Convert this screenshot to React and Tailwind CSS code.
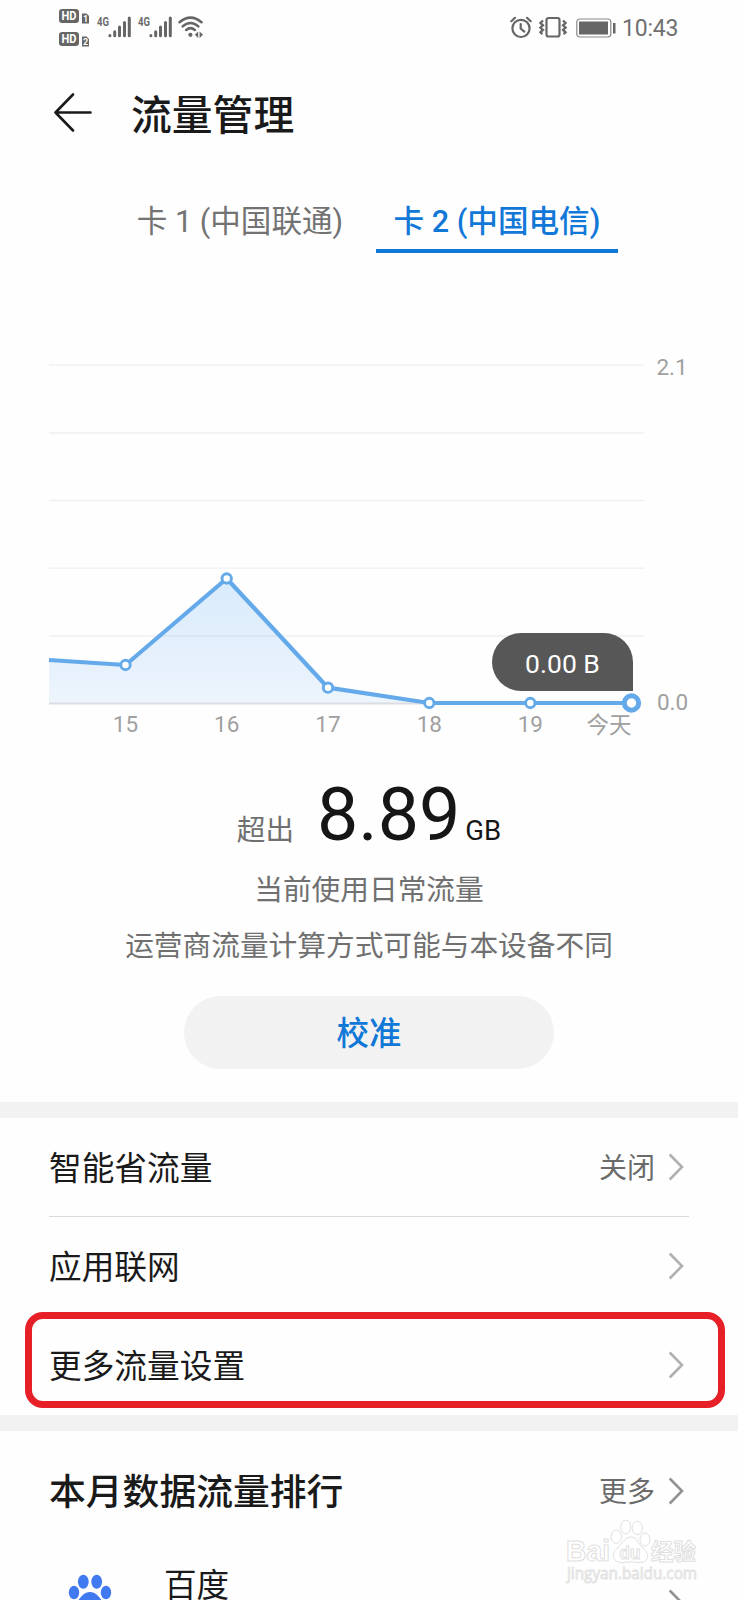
const cjk = "font-['Roboto','Noto_Sans_CJK_SC',sans-serif]";

const points = [
  [125.5, 665],
  [226.7, 578.5],
  [328, 687.7],
  [429.3, 703],
  [530.3, 703],
];

function Signal() {
  return (
    <svg className="h-[22px] w-[24px]" viewBox="0 0 24 22" stroke="#666" strokeWidth="3" strokeLinecap="round">
      <path d="M1.9 19.6v0.2M6.7 15.8v4M11.5 11v8.8M16.5 6.5v13.3M21.3 2v17.8" />
    </svg>
  );
}

function HdBadge({ n }) {
  return (
    <svg className="h-[15px] w-[32px]" viewBox="0 0 32 15" fontFamily="Roboto, sans-serif" fontWeight="700">
      <rect x="0" y="0" width="20" height="14" rx="3.2" fill="#666" />
      <text x="2.4" y="11.3" fontSize="12" fill="#fff" textLength="15" lengthAdjust="spacingAndGlyphs">HD</text>
      <path d="M23 4.5h4.5l2.5 2.5V14.5h-7z" fill="#666" />
      <text x="24.1" y="12.9" fontSize="9" fill="#fff">{n}</text>
    </svg>
  );
}

function FourG() {
  return (
    <svg className="-mt-[3px] h-[18px] w-[13px]" viewBox="0 -3 13 18">
      <text x="0" y="10" fontSize="13" fontWeight="700" fontFamily="Roboto, sans-serif" fill="#6a6a6a" textLength="12" lengthAdjust="spacingAndGlyphs">4G</text>
    </svg>
  );
}

function StatusBar() {
  return (
    <header className="flex h-[56px] items-start pl-[59px] pr-[59px]">
      <div className="mt-[9px] flex flex-col gap-[8px]">
        <HdBadge n="1" />
        <HdBadge n="2" />
      </div>
      <div className="ml-[6px] mt-[16px] flex items-start"><FourG /><div className="-ml-[2px]"><Signal /></div></div>
      <div className="ml-[6px] mt-[16px] flex items-start"><FourG /><div className="-ml-[2px]"><Signal /></div></div>
      <svg className="ml-[5px] mt-[16px] h-[22px] w-[26px]" viewBox="0 0 26 22" fill="none" stroke="#666" strokeWidth="2.5" strokeLinecap="round">
        <path d="M1.5 6.3Q12.5 -3 23.5 6.3M4.7 10.4Q12.5 3.6 20.3 10.4M8.2 14Q12.5 10.2 16.8 14" />
        <circle cx="12.4" cy="18.8" r="2.1" fill="#666" stroke="none" />
        <path d="M20.2 15.5v6.5l-3.4-3.2zM21.6 15.5v6.5l3.4-3.2z" fill="#666" stroke="none" />
      </svg>
      <div className="ml-auto mt-[16px] flex h-[23px] items-center">
        <svg className="h-[23px] w-[22px]" viewBox="0 0 22 23" fill="none" stroke="#666" strokeWidth="2.2" strokeLinecap="round">
          <circle cx="11" cy="12.4" r="8.6" />
          <path d="M10.7 8v4.6l3.6 3M1.3 5.2L5 1.8M20.7 5.2L17 1.8" />
        </svg>
        <svg className="ml-[7px] h-[23px] w-[28px]" viewBox="0 0 28 23" fill="none" stroke="#666" strokeWidth="2.2">
          <rect x="7.5" y="2" width="13" height="18.5" rx="2" />
          <path d="M4 4.5L1.4 7l2.6 2.3-2.6 2.3 2.6 2.3-2.6 2.3 2 1.9M24 4.5L26.6 7 24 9.3l2.6 2.3-2.6 2.3 2.6 2.3-2 1.9" strokeWidth="2.3" />
        </svg>
        <svg className="ml-[9px] h-[20px] w-[40px]" viewBox="0 0 40 20">
          <rect x="0.8" y="1" width="34" height="18" rx="3" fill="#fff" stroke="#888" strokeWidth="1.2" />
          <path d="M3 3.5h29v13H3zM37 5h2.5v10.5H37z" fill="#666" />
        </svg>
        <span className="ml-[6px] w-[57px] pt-[2px] text-[23px] leading-[23px] tracking-[-0.2px] text-[#707070]">10:43</span>
      </div>
    </header>
  );
}

function Chevron({ dark }) {
  return (
    <svg className="-mt-px ml-[13px] h-[28px] w-[17px]" viewBox="0 0 17 28" fill="none" stroke={dark ? "#929292" : "#b0b0b0"} strokeWidth="2.6">
      <path d="M1.7 1.5L14 14L1.7 26.5" />
    </svg>
  );
}

function Chart() {
  return (
    <section className="relative h-[480px]">
      <svg className="block h-[480px] w-[738px]" viewBox="0 280 738 480">
        <defs>
          <linearGradient id="area" x1="0" x2="0" y1="578" y2="703" gradientUnits="userSpaceOnUse">
            <stop offset="0" stopColor="#d9ebfc" />
            <stop offset="1" stopColor="#edf4fc" />
          </linearGradient>
        </defs>
        <path d="M49 660L125.5 665L226.7 578.5L328 687.7L429.3 703H49z" fill="url(#area)" />
        <path d="M49 365.2H644M49 433H644M49 500.5H644M49 568.2H644M49 636H644" stroke="#000" strokeOpacity="0.06" strokeWidth="1.3" />
        <path d="M49 703.5H632" stroke="#dcdde2" strokeWidth="2" />
        <path d="M49 660L125.5 665L226.7 578.5L328 687.7L429.3 703H631.5" fill="none" stroke="#64aaea" strokeWidth="4.2" strokeLinejoin="round" />
        {points.map(([x, y]) => (
          <circle key={x} cx={x} cy={y} r="4.7" fill="#fff" stroke="#64aaea" strokeWidth="2.9" />
        ))}
        <circle cx="631.5" cy="703" r="7.2" fill="#fff" stroke="#64aaea" strokeWidth="5" />
        <g fill="#a0a0a0" fontSize="22.5" fontFamily="Roboto, 'Noto Sans CJK SC', sans-serif" textAnchor="middle">
          <text x="125.5" y="732">15</text>
          <text x="226.7" y="732">16</text>
          <text x="328" y="732">17</text>
          <text x="429.3" y="732">18</text>
          <text x="530.3" y="732">19</text>
          <text x="609" y="733">今天</text>
          <text x="672" y="375">2.1</text>
          <text x="672.5" y="710">0.0</text>
        </g>
      </svg>
      <div className="absolute left-[492px] top-[353px] flex h-[58px] w-[141px] items-center justify-center rounded-[29px] rounded-br-none bg-[#575757] pt-[4px] text-[26.5px] leading-none text-white">
        0.00 B
      </div>
    </section>
  );
}

function Row({ label, value }) {
  return (
    <div className="flex h-[99px] items-center pl-[49px] pr-[53px] text-[32.7px] text-[#1a1a1a]">
      <span className="pt-[5px]">{label}</span>
      <span className="ml-auto pt-[3px] text-[28px] text-[#6b6b6b]">{value}</span>
      <Chevron />
    </div>
  );
}

function Watermark() {
  return (
    <svg className="absolute left-[560px] top-[1515px] h-[75px] w-[145px]" viewBox="560 1515 145 75" fill="#fff" stroke="#e0e0e0" strokeWidth="1">
      <g fontFamily="'Liberation Sans', 'Noto Sans CJK SC', sans-serif" fontWeight="700">
        <text x="566" y="1561" fontSize="29" textLength="44" lengthAdjust="spacingAndGlyphs">Bai</text>
        <ellipse cx="616.3" cy="1536.7" rx="5.2" ry="6.6" />
        <ellipse cx="625.7" cy="1527" rx="5" ry="6.8" />
        <ellipse cx="637.3" cy="1528" rx="5.2" ry="6.6" />
        <ellipse cx="645" cy="1539.5" rx="5" ry="6.5" />
        <path d="M631 1537C624 1537 622 1545 617.500 1548C610 1554 613 1563 623 1562.500Q631 1561 639 1562.500C649 1563 650 1554 643 1548C638 1544 637 1537 631 1537z" />
        <text x="619.5" y="1558.500" fontSize="18" textLength="21" lengthAdjust="spacingAndGlyphs">du</text>
        <text x="651" y="1560" fontSize="23" textLength="45" lengthAdjust="spacingAndGlyphs">经验</text>
      </g>
      <text x="567" y="1578.500" fontSize="15.5" fontFamily="'Open Sans', sans-serif" fill="#fafafa" strokeWidth="0.8" textLength="130" lengthAdjust="spacingAndGlyphs">jingyan.baidu.com</text>
    </svg>
  );
}

export default function App() {
  return (
    <div className={`relative h-[1600px] w-[738px] overflow-hidden bg-[#fefefe] ${cjk}`}>
      <StatusBar />
      <div className="flex h-[118px] items-center pl-[53px]">
        <svg className="-mt-[4px] h-[40px] w-[40px]" viewBox="0 0 40 40" fill="none" stroke="#1a1a1a" strokeWidth="2.6" strokeLinecap="round" strokeLinejoin="round">
          <path d="M37.5 19.5H2.5M20 1.5L2.5 19.5L20 37.5" />
        </svg>
        <h1 className="ml-[38px] pt-[3px] text-[40.8px] font-medium leading-none text-[#1a1a1a]">流量管理</h1>
      </div>
      <nav className="flex h-[106px] items-start pl-[119px] text-[30.6px]">
        <div className="mt-[24px] flex h-[55px] w-[242px] justify-center pt-[2px] leading-[44px] text-[#737373]">卡 1 (中国联通)</div>
        <div className="ml-[15px] mt-[24px] flex h-[55px] w-[242px] justify-center border-b-4 border-[#1278d8] pt-[2px] font-medium leading-[44px] text-[#1278d8]">卡 2 (中国电信)</div>
      </nav>
      <Chart />
      <section className="flex h-[342px] flex-col items-center text-[28.7px] text-[#707070]">
        <div className="flex h-[98px] items-baseline leading-[110px]">
          <span className="text-[28.6px]">超出</span>
          <span className="ml-[23px] text-[73.5px] text-[#161616]">8.89</span>
          <span className="ml-[5px] text-[27.5px] text-[#161616]">GB</span>
        </div>
        <p className="h-[56px] leading-[65px]">当前使用日常流量</p>
        <p className="h-[82px] leading-[64px]">运营商流量计算方式可能与本设备不同</p>
        <button className="h-[73px] w-[370px] rounded-full bg-[#f2f2f2] pt-[4px] text-[32.4px] font-medium text-[#1278d8]">校准</button>
      </section>
      <div className="h-[16px] bg-[#f2f2f2]" />
      <section className="relative h-[297px]">
        <Row label="智能省流量" value="关闭" />
        <div className="absolute left-[49px] top-[98px] h-px w-[640px] bg-[#d9d9d9]" />
        <Row label="应用联网" />
        <Row label="更多流量设置" />
        <div className="absolute left-[25px] top-[194px] h-[96px] w-[700px] rounded-[18px] border-[7px] border-[#e71f26]" />
      </section>
      <div className="h-[16px] bg-[#f2f2f2]" />
      <section>
        <div className="flex h-[120px] items-center pl-[49px] pr-[53px]">
          <h2 className="pt-[4px] text-[36.8px] font-medium text-[#1a1a1a]">本月数据流量排行</h2>
          <span className="ml-auto pt-[4px] text-[28px] text-[#6b6b6b]">更多</span>
          <Chevron dark />
        </div>
        <div className="flex h-[110px] items-start pl-[68px] pr-[53px]">
          <svg className="mt-[23px] h-[50px] w-[44px]" viewBox="0 0 44 50" fill="#4079f0">
            <ellipse cx="6" cy="18.5" rx="5.2" ry="6.8" />
            <ellipse cx="15.3" cy="7.7" rx="5.4" ry="7" />
            <ellipse cx="28.7" cy="7.7" rx="5.4" ry="7" />
            <ellipse cx="38" cy="18.5" rx="5.2" ry="6.8" />
            <path d="M22 18C14 18 12 26 6 31C-2 40 5 50 14 48H30C39 50 46 40 38 31C32 26 30 18 22 18z" />
          </svg>
          <span className="ml-[52px] mt-[11px] text-[32.6px] leading-[48px] text-[#1a1a1a]">百度</span>
          <div className="ml-auto mt-[39px]"><Chevron dark /></div>
        </div>
      </section>
      <Watermark />
    </div>
  );
}
